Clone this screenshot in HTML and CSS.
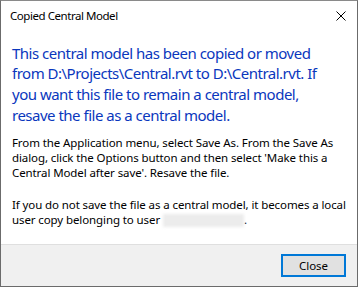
FILE: index.html
```html
<!DOCTYPE html>
<html lang="en">
<head>
    <meta charset="UTF-8">
    <title>Copied Central Model</title>
    <link rel="stylesheet" href="styles.css">
</head>
<body>

    <!-- Dialog Window -->
    <div class="dialog">

        <!-- Title Bar -->
        <div class="titlebar">
            <span class="title">Copied Central Model</span>
            <span class="close-x">
                <svg width="10" height="10" viewBox="0 0 10 10">
                    <path d="M0.5 0.5 L9.5 9.5 M9.5 0.5 L0.5 9.5" stroke="#000" stroke-width="1" fill="none"/>
                </svg>
            </span>
        </div>

        <!-- Message -->
        <div class="content">
            <p class="main-instruction">This central model has been copied or moved<br>from D:\Projects\Central.rvt to D:\Central.rvt. If<br>you want this file to remain a central model,<br>resave the file as a central model.</p>
            <p class="body-text">From the Application menu, select Save As. From the Save As<br>dialog, click the Options button and then select 'Make this a<br>Central Model after save'. Resave the file.</p>
            <p class="body-text">If you do not save the file as a central model, it becomes a local<br>user copy belonging to user <span class="blurred"></span>.</p>
        </div>

        <!-- Footer Buttons -->
        <div class="footer">
            <button class="btn-close">Close</button>
        </div>
    </div>

</body>
</html>
```

FILE: styles.css
```css
/* Base Styles */
html, body {
    margin: 0;
    padding: 0;
    background: #fff;
}

body {
    font-family: "Noto Sans", "Open Sans", sans-serif;
    color: #000;
}

/* Dialog Frame */
.dialog {
    width: 358px;
    height: 287px;
    box-sizing: border-box;
    border: 1px solid #6b6b6b;
    border-top-color: #8a8a8a;
    display: flex;
    flex-direction: column;
    background: #fff;
}

/* Title Bar */
.titlebar {
    height: 30px;
    display: flex;
    align-items: center;
    justify-content: space-between;
    padding: 0 11px 0 9px;
    font-size: 11.5px;
    letter-spacing: -0.45px;
}

.close-x {
    display: flex;
}

/* Content */
.content {
    flex: 1;
    padding: 12px 11px 0 11px;
}

.main-instruction {
    margin: 0 0 10px 0;
    font-size: 15px;
    line-height: 20.7px;
    letter-spacing: -0.5px;
    color: #0a37bd;
    white-space: nowrap;
}

.body-text {
    margin: 0 0 17px 0;
    font-size: 11.5px;
    line-height: 15px;
    letter-spacing: -0.1px;
    white-space: nowrap;
}

.blurred {
    display: inline-block;
    width: 81px;
    height: 13px;
    vertical-align: -3px;
    background: #ececec;
    filter: blur(1.5px);
}

/* Footer */
.footer {
    height: 41px;
    background-color: #f0f0f0;
    border-top: 1px solid #dfdfdf;
    display: flex;
    justify-content: flex-end;
    align-items: center;
    padding-right: 11px;
}

.btn-close {
    width: 65px;
    height: 23px;
    box-sizing: border-box;
    border: 2px solid #0078d7;
    background-color: #e1e1e1;
    font-family: inherit;
    font-size: 11.5px;
    padding: 0;
    color: #000;
}
```
